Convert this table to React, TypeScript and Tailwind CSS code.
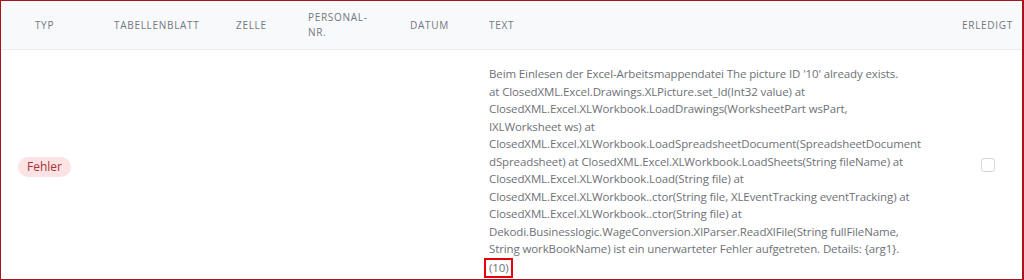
const lines = [
  "Beim Einlesen der Excel-Arbeitsmappendatei The picture ID '10' already exists.",
  'at ClosedXML.Excel.Drawings.XLPicture.set_Id(Int32 value) at',
  'ClosedXML.Excel.XLWorkbook.LoadDrawings(WorksheetPart wsPart,',
  'IXLWorksheet ws) at',
  'ClosedXML.Excel.XLWorkbook.LoadSpreadsheetDocument(SpreadsheetDocument',
  'dSpreadsheet) at ClosedXML.Excel.XLWorkbook.LoadSheets(String fileName) at',
  'ClosedXML.Excel.XLWorkbook.Load(String file) at',
  'ClosedXML.Excel.XLWorkbook..ctor(String file, XLEventTracking eventTracking) at',
  'ClosedXML.Excel.XLWorkbook..ctor(String file) at',
  'Dekodi.Businesslogic.WageConversion.XlParser.ReadXlFile(String fullFileName,',
  'String workBookName) ist ein unerwarteter Fehler aufgetreten. Details: {arg1}.',
];

function App() {
  return (
    <div
      className="h-[280px] w-[1024px] overflow-hidden border-t border-l border-b border-r-2 border-[#a8141b] bg-white text-[#6b6f76]"
      style={{ fontFamily: '"Open Sans", "Noto Sans", sans-serif' }}
    >
      {/* Header */}
      <div className="flex h-[49px] items-center border-b border-[#eaecef] bg-[#f8f9fb] text-[10px] uppercase leading-[15px] tracking-[0.07em] text-[#737780]">
        <div className="w-[95px] pl-[17px]">
          <div className="w-[53px] text-center">Typ</div>
        </div>
        <div className="w-[122px] pl-[18px]">Tabellenblatt</div>
        <div className="w-[72px] pl-[18px]">Zelle</div>
        <div className="w-[102px] pl-[18px]">
          Personal-
          <br />
          Nr.
        </div>
        <div className="w-[79px] pl-[18px]">Datum</div>
        <div className="w-[482px] pl-[18px]">Text</div>
        <div className="flex-1 text-center">Erledigt</div>
      </div>

      {/* Row */}
      <div className="flex items-center">
        <div className="w-[95px] pl-[17px]">
          <span className="inline-flex h-[20px] w-[53px] items-center justify-center rounded-full bg-[#fde3e3] text-[12px] text-[#a8323a]">
            Fehler
          </span>
        </div>
        <div className="w-[122px]" />
        <div className="w-[72px]" />
        <div className="w-[102px]" />
        <div className="w-[79px]" />
        <div className="w-[482px] pl-[18px] pt-[15px] pb-[3px] text-[11.5px] leading-[17.5px] tracking-[-0.01em] text-[#6e7177]">
          {lines.map((l) => (
            <div key={l} className="whitespace-nowrap">
              {l}
            </div>
          ))}
          <span className="-ml-[5px] inline-block border-2 border-[#e8000b] px-[3px] leading-[16px] text-[#6e7177]">
            (10)
          </span>
        </div>
        <div className="flex flex-1 justify-center">
          <span className="block h-[14px] w-[14px] rounded-[3px] border border-[#d4d6db] bg-white" />
        </div>
      </div>
    </div>
  );
}

export default App;
